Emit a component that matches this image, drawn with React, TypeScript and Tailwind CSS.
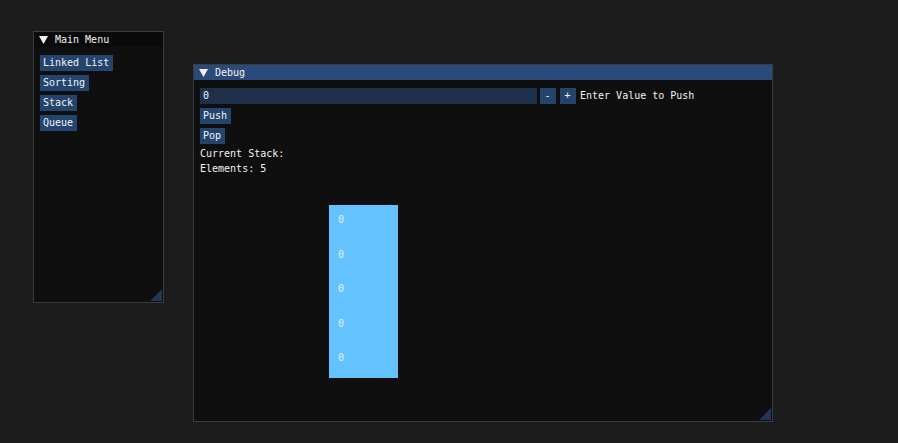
import React from 'react'

const font = { fontFamily: '"DejaVu Sans Mono", "Liberation Mono", monospace' }

function TitleBar({ title, active }: { title: string; active?: boolean }) {
  return (
    <div
      className={`flex h-[15px] shrink-0 items-center pl-[5px] ${active ? 'bg-[#294a7a]' : 'bg-[#0a0a0a]'}`}
    >
      <svg width="9" height="8" viewBox="0 0 9 8" className="mr-[7px]">
        <polygon points="0,0 9,0 4.5,8" fill="#f2f2f2" />
      </svg>
      <span className="leading-[15px] text-[#f2f2f2]">{title}</span>
    </div>
  )
}

function Grip() {
  return (
    <svg width="12" height="12" viewBox="0 0 12 12" className="absolute bottom-[1px] right-[1px]">
      <polygon points="12,0 12,12 0,12" fill="#1f3658" />
    </svg>
  )
}

function Button({ label, className = '' }: { label: string; className?: string }) {
  return (
    <div
      className={`flex h-4 items-center bg-[#23456d] pl-[3px] pr-1 text-[#f2f2f2] leading-4 ${className}`}
    >
      {label}
    </div>
  )
}

const menuItems = ['Linked List', 'Sorting', 'Stack', 'Queue']
const stack = [0, 0, 0, 0, 0]

export default function App() {
  return (
    <div className="relative h-[443px] w-[898px] overflow-hidden bg-[#1c1c1c] text-[10px]" style={font}>
      {/* Main Menu window */}
      <div className="absolute left-[33px] top-[31px] flex h-[272px] w-[131px] flex-col border border-[#3b3b42] bg-[#0f0f0f]">
        <TitleBar title="Main Menu" />
        <div className="flex flex-col items-start gap-1 pl-[6px] pt-2">
          {menuItems.map((item) => (
            <Button key={item} label={item} />
          ))}
        </div>
        <Grip />
      </div>

      {/* Debug window */}
      <div className="absolute left-[193px] top-[64px] flex h-[358px] w-[580px] flex-col border border-[#3b3b42] bg-[#0f0f0f]">
        <TitleBar title="Debug" active />
        <div className="flex flex-col items-start pl-[6px] pt-2 text-[#f2f2f2]">
          <div className="flex h-4 items-center">
            <div className="flex h-4 w-[337px] items-center bg-[#1d2f49] pl-[3px] leading-4">0</div>
            <Button label="-" className="ml-[3px] w-4 justify-center px-0 pl-0 pr-0" />
            <Button label="+" className="ml-1 w-4 justify-center px-0 pl-0 pr-0" />
            <span className="ml-1 leading-4">Enter Value to Push</span>
          </div>
          <Button label="Push" className="mt-1" />
          <Button label="Pop" className="mt-1" />
          <div className="mt-[2px] leading-[15px]">Current Stack:</div>
          <div className="leading-[15px]">Elements: {stack.length}</div>

          <div className="ml-[129px] mt-[29px] flex w-[69px] flex-col bg-[#64c3ff]">
            {stack.map((v, i) => (
              <div key={i} className="h-[34.6px] pl-[9px] pt-[8px] leading-[13px] text-[#e4f3ff]">
                {v}
              </div>
            ))}
          </div>
        </div>
        <Grip />
      </div>
    </div>
  )
}
